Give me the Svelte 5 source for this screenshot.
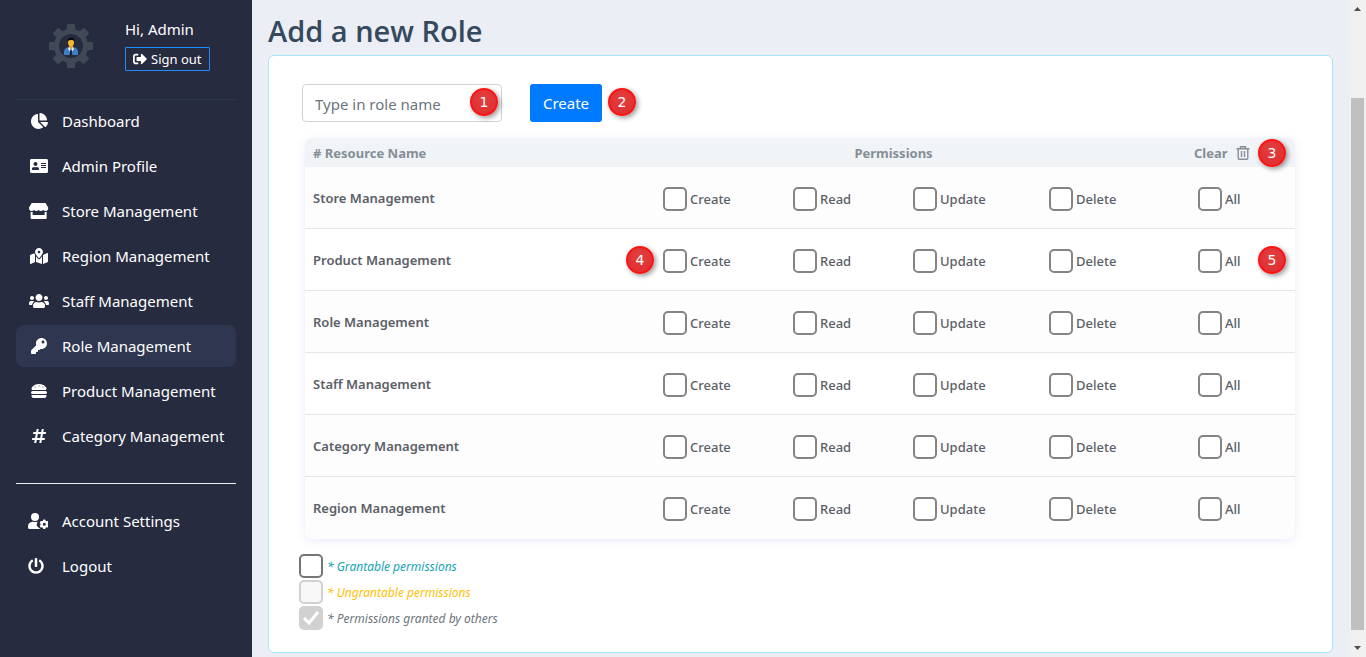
<script>
  const icons = {
    pie: { w: 544, d: 'M527.79 288H290.5l158.03 158.03c6.04 6.04 15.98 6.53 22.19.68 38.7-36.46 65.32-85.61 73.13-140.86 1.34-9.46-6.51-17.85-16.06-17.85zm-15.83-64.8C503.72 103.74 408.26 8.28 288.8.04 279.68-.59 272 7.1 272 16.24V240h223.77c9.14 0 16.82-7.68 16.19-16.8zM224 288V50.71c0-9.55-8.39-17.4-17.84-16.06C86.99 51.49-4.1 155.6.14 280.37 4.5 408.51 114.83 513.59 243.03 511.98c50.4-.63 96.97-16.87 135.26-44.03 7.9-5.6 8.42-17.23 1.57-24.08L224 288z' },
    card: { w: 576, d: 'M528 32H48C21.5 32 0 53.5 0 80v352c0 26.5 21.5 48 48 48h480c26.5 0 48-21.5 48-48V80c0-26.5-21.5-48-48-48zm-352 96c35.3 0 64 28.7 64 64s-28.7 64-64 64-64-28.7-64-64 28.7-64 64-64zm112 236.8c0 10.6-10 19.2-22.4 19.2H86.4C74 384 64 375.4 64 364.8v-19.2c0-31.8 30.1-57.6 67.2-57.6h5c12.3 5.1 25.7 8 39.8 8s27.6-2.9 39.8-8h5c37.1 0 67.2 25.8 67.2 57.6v19.2zM512 312c0 4.4-3.6 8-8 8H360c-4.4 0-8-3.6-8-8v-16c0-4.4 3.6-8 8-8h144c4.4 0 8 3.6 8 8v16zm0-64c0 4.4-3.6 8-8 8H360c-4.4 0-8-3.6-8-8v-16c0-4.4 3.6-8 8-8h144c4.4 0 8 3.6 8 8v16zm0-64c0 4.4-3.6 8-8 8H360c-4.4 0-8-3.6-8-8v-16c0-4.4 3.6-8 8-8h144c4.4 0 8 3.6 8 8v16z' },
    store: { w: 616, d: 'M602 118.6L537.1 15C531.3 5.7 521 0 510 0H106C95 0 84.7 5.7 78.9 15L14 118.6c-33.5 53.5-3.8 127.9 58.8 136.4 4.5.6 9.1.9 13.7.9 29.6 0 55.8-13 73.8-33.1 18 20.1 44.3 33.1 73.8 33.1 29.6 0 55.8-13 73.8-33.1 18 20.1 44.3 33.1 73.8 33.1 29.6 0 55.8-13 73.8-33.1 18.1 20.1 44.3 33.1 73.8 33.1 4.7 0 9.2-.3 13.7-.9 62.8-8.4 92.6-82.8 59-136.4zM529.5 288c-10 0-19.9-1.5-29.5-3.8V384H116v-99.8c-9.6 2.2-19.5 3.8-29.5 3.8-6 0-12.1-.4-18-1.2-5.6-.8-11.1-2.1-16.4-3.6V480c0 17.7 14.3 32 32 32h448c17.7 0 32-14.3 32-32V283.2c-5.4 1.6-10.8 2.9-16.4 3.6-6.1.8-12.1 1.2-18.2 1.2z' },
    map: { w: 576, d: 'M288 0c-69.59 0-126 56.41-126 126 0 56.26 82.35 158.8 113.9 196.02 6.39 7.54 17.82 7.54 24.2 0C331.65 284.8 414 182.26 414 126 414 56.41 357.59 0 288 0zm0 168c-23.2 0-42-18.8-42-42s18.8-42 42-42 42 18.8 42 42-18.8 42-42 42zM20.12 215.95A32.006 32.006 0 0 0 0 245.66v250.32c0 11.32 11.43 19.06 21.94 14.86L160 448V214.92c-8.84-15.98-16.07-31.54-21.25-46.42L20.12 215.95zM288 359.67c-14.07 0-27.38-6.18-36.51-16.96-19.66-23.2-40.57-49.62-59.49-76.72v182l192 64V266c-18.92 27.09-39.82 53.52-59.49 76.72-9.13 10.77-22.44 16.95-36.51 16.95zm266.06-198.51L416 224v288l139.88-55.95A31.996 31.996 0 0 0 576 426.34V176.02c0-11.32-11.43-19.06-21.94-14.86z' },
    users: { w: 640, d: 'M96 224c35.3 0 64-28.7 64-64s-28.7-64-64-64-64 28.7-64 64 28.7 64 64 64zm448 0c35.3 0 64-28.7 64-64s-28.7-64-64-64-64 28.7-64 64 28.7 64 64 64zm32 32h-64c-17.6 0-33.5 7.1-45.1 18.6 40.3 22.1 68.9 62 75.1 109.4h66c17.7 0 32-14.3 32-32v-32c0-35.3-28.7-64-64-64zm-256 0c61.9 0 112-50.1 112-112S381.9 32 320 32 208 82.1 208 144s50.1 112 112 112zm76.8 32h-8.3c-20.8 10-43.9 16-68.5 16s-47.6-6-68.5-16h-8.3C179.6 288 128 339.6 128 403.2V432c0 26.5 21.5 48 48 48h288c26.5 0 48-21.5 48-48v-28.8c0-63.6-51.6-115.2-115.2-115.2zm-223.7-13.4C161.5 263.1 145.6 256 128 256H64c-35.3 0-64 28.7-64 64v32c0 17.7 14.3 32 32 32h65.9c6.3-47.4 34.9-87.3 75.2-109.4z' },
    key: { w: 512, d: 'M512 176.001C512 273.203 433.202 352 336 352c-11.22 0-22.19-1.062-32.827-3.069l-24.012 27.014A23.999 23.999 0 0 1 261.223 384H224v40c0 13.255-10.745 24-24 24h-40v40c0 13.255-10.745 24-24 24H24c-13.255 0-24-10.745-24-24v-78.059c0-6.365 2.529-12.47 7.029-16.971l161.802-161.802C163.108 213.814 160 195.271 160 176 160 78.798 238.797.001 335.999 0 433.488-.001 512 78.511 512 176.001zM336 128c0 26.51 21.49 48 48 48s48-21.49 48-48-21.49-48-48-48-48 21.49-48 48z' },
    burger: { w: 512, d: 'M464 256H48a48 48 0 0 0 0 96h416a48 48 0 0 0 0-96zm16 128H32a16 16 0 0 0-16 16v16a64 64 0 0 0 64 64h352a64 64 0 0 0 64-64v-16a16 16 0 0 0-16-16zM58.64 224h394.72c34.57 0 54.62-43.9 34.82-75.88C448 83.2 359.55 32.1 256 32c-103.54.1-192 51.2-232.18 116.11C4 180.09 24.07 224 58.64 224zM384 112a16 16 0 1 1-16 16 16 16 0 0 1 16-16zM256 80a16 16 0 1 1-16 16 16 16 0 0 1 16-16zm-128 32a16 16 0 1 1-16 16 16 16 0 0 1 16-16z' },
    hash: { w: 448, d: 'M440.667 182.109l7.143-40c1.313-7.355-4.342-14.109-11.813-14.109h-74.81l14.623-81.891C377.123 38.754 371.468 32 363.997 32h-40.632a12 12 0 0 0-11.813 9.891L296.175 128H197.54l14.623-81.891C213.477 38.754 207.822 32 200.35 32h-40.632a12 12 0 0 0-11.813 9.891L132.528 128H53.432a12 12 0 0 0-11.813 9.891l-7.143 40C33.163 185.246 38.818 192 46.289 192h74.81L98.242 320H19.146a12 12 0 0 0-11.813 9.891l-7.143 40C-1.123 377.246 4.532 384 12.003 384h74.81L72.19 465.891C70.877 473.246 76.532 480 84.003 480h40.632a12 12 0 0 0 11.813-9.891L151.826 384h98.634l-14.623 81.891C234.523 473.246 240.178 480 247.65 480h40.632a12 12 0 0 0 11.813-9.891L315.472 384h79.096a12 12 0 0 0 11.813-9.891l7.143-40c1.313-7.355-4.342-14.109-11.813-14.109h-74.81l22.857-128h79.096a12 12 0 0 0 11.813-9.891zM261.889 320h-98.634l22.857-128h98.634l-22.857 128z' },
    userCog: { w: 640, d: 'M224 256a128 128 0 1 0 0-256 128 128 0 0 0 0 256zM134 288C60 288 0 348 0 422v42c0 26 22 48 48 48h345c-16-9-30-20-32-35-12-6-24-14-34-24-22-17-41-47-50-78-5-20 8-34 21-44-1-10-1-20 0-32-8-5-15-10-19-16-18 4-36 5-55 5s-50-5-73-16zm361-75c-8 1-13 5-14 12l-5 24-32 18-23-8c-7-2-13-1-17 5-12 15-21 31-26 48-2 6 0 11 5 15l18 16v38l-18 16c-5 4-7 9-5 15 5 17 14 33 26 48 4 6 10 7 17 5l23-8 32 18 5 24c1 7 6 11 14 12 17 2 34 2 51 0 7-1 12-5 13-12l5-24 32-18 23 8c7 2 13 1 17-5 12-15 20-31 25-48 2-6 0-11-5-15l-18-16v-38l18-16c5-4 7-9 5-15-5-17-13-33-25-48-4-6-10-7-17-5l-23 8-32-18-5-24c-1-7-6-11-13-12-17-2-34-2-51 0zm26 101a48 48 0 1 1 0 96 48 48 0 0 1 0-96z' },
    power: { w: 512, d: 'M400 54.1c63 45 104 118.6 104 201.9 0 136.8-110.8 247.7-247.5 248C120 504.3 8.2 393 8 256.4 7.9 173.1 48.9 99.3 111.8 54.2c11.7-8.3 28-4.8 35 7.7L162.6 90c5.9 10.5 3.1 23.8-6.6 31-41.5 30.8-68 79.6-68 134.9-.1 92.3 74.5 168.1 168 168.1 91.6 0 168.6-74.2 168-169.1-.3-51.8-24.7-101.8-68.1-134-9.7-7.2-12.4-20.5-6.5-30.9l15.8-28.1c7-12.4 23.2-16.1 34.8-7.8zM296 264V24c0-13.3-10.7-24-24-24h-32c-13.3 0-24 10.7-24 24v240c0 13.3 10.7 24 24 24h32c13.3 0 24-10.7 24-24z' },
    signOut: { w: 512, d: 'M497 273L329 441c-15 15-41 4.5-41-17v-96H152c-13.3 0-24-10.7-24-24v-96c0-13.3 10.7-24 24-24h136V88c0-21.4 25.9-32 41-17l168 168c9.3 9.4 9.3 24.6 0 34zM192 436v-40c0-6.6-5.4-12-12-12H96c-17.7 0-32-14.3-32-32V160c0-17.7 14.3-32 32-32h84c6.6 0 12-5.4 12-12V76c0-6.6-5.4-12-12-12H96c-53 0-96 43-96 96v192c0 53 43 96 96 96h84c6.6 0 12-5.4 12-12z' },
  };

  const mainLinks = [
    ['Dashboard', 'pie'],
    ['Admin Profile', 'card'],
    ['Store Management', 'store'],
    ['Region Management', 'map'],
    ['Staff Management', 'users'],
    ['Role Management', 'key'],
    ['Product Management', 'burger'],
    ['Category Management', 'hash'],
  ];
  const accountLinks = [
    ['Account Settings', 'userCog'],
    ['Logout', 'power'],
  ];

  const resources = ['Store', 'Product', 'Role', 'Staff', 'Category', 'Region'];
  const actions = ['Create', 'Read', 'Update', 'Delete', 'All'];
  const gearTeeth = [0, 45, 90, 135, 180, 225, 270, 315];

  let roleName = $state('');
  let granted = $state(resources.map(() => actions.map(() => false)));

  function toggle(row, col) {
    if (col === 4) {
      const value = !granted[row][4];
      granted[row] = actions.map(() => value);
    } else {
      granted[row][col] = !granted[row][col];
      granted[row][4] = granted[row].slice(0, 4).every(Boolean);
    }
  }
  function clearAll() {
    granted = resources.map(() => actions.map(() => false));
  }
</script>

{#snippet icon(name)}
  <svg class="icon" viewBox="0 0 {icons[name].w} 512" aria-hidden="true"><path fill="currentColor" d={icons[name].d} /></svg>
{/snippet}

{#snippet navItem(label, name)}
  <li>
    <a href="#{name}" class:active={name === 'key'}>
      <span class="slot">{@render icon(name)}</span>{label}
    </a>
  </li>
{/snippet}

<div class="shell">
  <aside>
    <div class="profile">
      <svg class="avatar" viewBox="0 0 44 44" aria-hidden="true">
        <g fill="#414956">
          {#each gearTeeth as angle}
            <path d="M17.500 6L18.200 0h7.600L26.500 6z" transform="rotate({angle} 22 22)" />
          {/each}
        </g>
        <circle cx="22" cy="22" r="14.500" fill="none" stroke="#414956" stroke-width="5" />
        <path d="M15 31v-3c0-3 2-4.500 5-5h4c3 .5 5 2 5 5v3z" fill="#3f7fc6" />
        <path d="M20 20h4v3.500l-2 2.500-2-2.500z" fill="#e0a020" />
        <path d="M20 23l2 2.500 2-2.500 1 2-2 2.500h-2l-2-2.500z" fill="#e8eef5" />
        <path d="M21.300 25.500h1.400l.6 5.500h-2.600z" fill="#17202f" />
        <ellipse cx="22" cy="18.500" rx="3" ry="3.700" fill="#f5b52e" />
        <path d="M18.600 18c-.6-3 1-4.500 3.400-4.500 3 0 4 2 3.400 4.500-.4-1.500-1-2-3.400-2s-2.800.8-3.400 2z" fill="#0c0c10" />
      </svg>
      <div class="who">
        <span>Hi, Admin</span>
        <button class="sign-out" type="button">{@render icon('signOut')}Sign out</button>
      </div>
    </div>
    <nav>
      <ul class="main-links">
        {#each mainLinks as [label, name]}{@render navItem(label, name)}{/each}
      </ul>
      <ul class="account-links">
        {#each accountLinks as [label, name]}{@render navItem(label, name)}{/each}
      </ul>
    </nav>
  </aside>

  <main>
    <h1>Add a new Role</h1>
    <section class="panel">
      <form onsubmit={(e) => e.preventDefault()}>
        <div class="field">
          <input class="name" type="text" placeholder="Type in role name" aria-label="Role name" bind:value={roleName} />
          <span class="badge in-field">1</span>
        </div>
        <div class="field">
          <button class="create" type="submit">Create</button>
          <span class="badge beside">2</span>
        </div>
      </form>

      <table>
        <colgroup>
          <col /><col class="c-create" /><col class="c-read" /><col class="c-update" /><col class="c-delete" /><col class="c-all" />
        </colgroup>
        <thead>
          <tr>
            <th scope="col"># Resource Name</th>
            <th scope="colgroup" colspan="4" class="permissions">Permissions</th>
            <th scope="col" class="clear-cell">
              <button class="clear" type="button" onclick={clearAll}>
                Clear
                <svg class="trash" viewBox="0 0 14 14" aria-hidden="true" fill="none" stroke="currentColor" stroke-width="1.400">
                  <path d="M0.500 2.700h13M4.500 2.500V.8h5v1.700M2.200 2.700V12.300q0 1 1 1h7.600q1 0 1-1V2.700M5.500 5v6M8.500 5v6" />
                </svg>
              </button>
              <span class="badge edge">3</span>
            </th>
          </tr>
        </thead>
        <tbody>
          {#each resources as resource, r}
            <tr>
              <th scope="row">{resource} Management</th>
              {#each actions as action, c}
                <td>
                  <label>
                    <input type="checkbox" checked={granted[r][c]} onchange={() => toggle(r, c)} />{action}
                  </label>
                  {#if r === 1 && c === 0}<span class="badge before">4</span>{/if}
                  {#if r === 1 && c === 4}<span class="badge edge">5</span>{/if}
                </td>
              {/each}
            </tr>
          {/each}
        </tbody>
      </table>

      <div class="legend">
        <label class="grantable"><input type="checkbox" />* Grantable permissions</label>
        <label class="ungrantable"><input type="checkbox" disabled />* Ungrantable permissions</label>
        <label class="others"><input type="checkbox" checked disabled />* Permissions granted by others</label>
      </div>
    </section>
  </main>

  <div class="scrollbar" aria-hidden="true">
    <svg viewBox="0 0 17 17"><path d="M5 11l3.500-4 3.500 4z" fill="#505050" /></svg>
    <div class="before-thumb"></div>
    <div class="thumb"></div>
    <div class="after-thumb"></div>
    <svg viewBox="0 0 17 17"><path d="M5 6l3.500 4L12 6z" fill="#505050" /></svg>
  </div>
</div>

<style>
  :global(body) {
    margin: 0;
    background: #ebeef4;
    font-family: 'Noto Sans', 'Open Sans', sans-serif;
  }
  * {
    box-sizing: border-box;
  }
  .shell {
    display: grid;
    grid-template-columns: 252px minmax(0, 1fr) 17px;
    min-height: 100vh;
  }
  button,
  input {
    font: inherit;
  }
  .icon {
    display: block;
    height: 16px;
    flex: none;
  }

  aside {
    background: #272b3f;
    color: #fff;
    padding: 0 16px;
    font-size: 15px;
  }
  .profile {
    display: flex;
    align-items: center;
    gap: 32px;
    height: 100px;
    padding: 0 0 8px 33px;
    border-bottom: 1px solid #2e3750;
  }
  .avatar {
    width: 44px;
    height: 44px;
    flex: none;
  }
  .who {
    display: flex;
    flex-direction: column;
    align-items: flex-start;
    gap: 7px;
    padding-bottom: 2px;
    line-height: 22px;
  }
  .sign-out {
    display: flex;
    align-items: center;
    gap: 4px;
    height: 24px;
    padding: 0 7px;
    border: 1px solid #1e8bff;
    border-radius: 1px;
    background: none;
    color: #fff;
    font-size: 13px;
  }
  .sign-out .icon {
    height: 14px;
  }
  ul {
    list-style: none;
    margin: 0;
    padding: 0;
    display: grid;
    gap: 3px;
  }
  nav a {
    display: flex;
    align-items: center;
    gap: 10px;
    height: 42px;
    padding-left: 10px;
    border-radius: 8px;
    color: #fff;
    text-decoration: none;
    white-space: nowrap;
  }
  nav a.active {
    background: #2f3750;
  }
  .slot {
    display: flex;
    justify-content: center;
    width: 26px;
  }
  .account-links {
    margin-top: 26px;
    padding-top: 16px;
    border-top: 1px solid #eef0f6;
  }
  .account-links .slot {
    justify-content: flex-start;
    padding-left: 2px;
  }

  main {
    padding: 12px 16px 4px;
  }
  h1 {
    margin: 0 0 5px;
    color: #34495e;
    font: 600 29px/38px 'Open Sans', sans-serif;
  }
  .panel {
    padding: 28px 37px 22px 30px;
    border: 1px solid #a8e4fa;
    border-radius: 6px;
    background: #fff;
  }
  form {
    display: flex;
    gap: 28px;
    margin: 0 0 16px 3px;
  }
  .field {
    position: relative;
  }
  .name {
    display: block;
    width: 200px;
    height: 38px;
    padding: 2px 12px 0;
    border: 1px solid #ced4da;
    border-radius: 4px;
    color: #495057;
    font-size: 15px;
  }
  .name::placeholder {
    color: #6c757d;
  }
  .create {
    display: block;
    width: 72px;
    height: 38px;
    padding: 0;
    border: 0;
    border-radius: 3px;
    background: #007bff;
    color: #fff;
    font-size: 15px;
  }

  table {
    width: calc(100% - 6px);
    margin-left: 6px;
    table-layout: fixed;
    border-collapse: separate;
    border-spacing: 0;
    border-radius: 8px;
    background: #fdfdfe;
    box-shadow: 0 2px 8px rgba(110, 90, 240, 0.13);
    color: #5b6066;
    font-size: 13px;
  }
  .c-create { width: 130px; }
  .c-read { width: 120px; }
  .c-update { width: 136px; }
  .c-delete { width: 149px; }
  .c-all { width: 105px; }
  th,
  td {
    position: relative;
    padding: 0 8px;
    text-align: left;
    font-weight: 600;
    white-space: nowrap;
  }
  tbody td {
    font-weight: 500;
  }
  thead th {
    height: 29px;
    background: #f0f4f7;
    color: #868e96;
    font-weight: 700;
  }
  thead th:first-child {
    border-top-left-radius: 8px;
  }
  thead th:last-child {
    border-top-right-radius: 8px;
  }
  thead .permissions {
    padding-right: 66px;
    text-align: center;
  }
  thead .clear-cell {
    padding: 0 4px;
  }
  .clear {
    display: flex;
    align-items: center;
    gap: 8px;
    padding: 0;
    border: 0;
    background: none;
    color: inherit;
  }
  .trash {
    width: 14px;
    height: 14px;
  }
  tbody th,
  tbody td {
    height: 62px;
    border-bottom: 1px solid #e4e6e9;
  }
  tbody tr:nth-child(even) > * {
    background: #fff;
  }
  tbody tr:last-child > * {
    border-bottom: 0;
    background: none;
  }

  label {
    display: flex;
    align-items: center;
    gap: 3px;
  }
  td label {
    padding-top: 2px;
  }
  input[type='checkbox'] {
    appearance: none;
    flex: none;
    width: 24px;
    height: 24px;
    margin: 0;
    border: 2px solid #848484;
    border-radius: 5px;
    background: #fff center / 20px 20px no-repeat;
  }
  input[type='checkbox']:checked {
    border-color: #007bff;
    background-color: #007bff;
    background-image: url("data:image/svg+xml,%3Csvg xmlns='http://www.w3.org/2000/svg' viewBox='0 0 20 20'%3E%3Cpath d='M3 10l5 5 9-11' fill='none' stroke='white' stroke-width='3'/%3E%3C/svg%3E");
  }
  input[type='checkbox']:disabled {
    border-color: #d1d1d1;
    background-color: #f8f8f8;
  }
  input[type='checkbox']:checked:disabled {
    background-color: #d1d1d1;
  }

  .legend {
    display: grid;
    justify-content: start;
    gap: 2px;
    margin-top: 15px;
    font-size: 12px;
    font-style: italic;
  }
  .legend label {
    gap: 4px;
  }
  .legend .grantable { color: #17a2b8; }
  .legend .grantable input { border-color: #767676; }
  .legend .ungrantable { color: #ffc107; }
  .legend .others { color: #6c757d; }

  .badge {
    position: absolute;
    display: flex;
    align-items: center;
    justify-content: center;
    width: 28px;
    height: 28px;
    border: 2px solid #fc1414;
    border-radius: 50%;
    background: radial-gradient(circle at 50% 35%, #e24040, #df2b2f);
    box-shadow: 2px 2px 5px rgba(0, 0, 0, 0.4);
    color: #fff;
    font: 400 14px/1 'DejaVu Sans', sans-serif;
  }
  .in-field {
    top: 4px;
    right: 4px;
  }
  .beside {
    top: 4px;
    left: 78px;
  }
  .edge {
    top: 50%;
    right: 9px;
    margin-top: -14px;
  }
  .before {
    top: 50%;
    left: -29px;
    margin-top: -14px;
  }

  .scrollbar {
    display: flex;
    flex-direction: column;
    background: #f0f0f0;
  }
  .scrollbar svg {
    flex: none;
    width: 17px;
    height: 17px;
  }
  .before-thumb { flex: 81; }
  .thumb {
    flex: 532;
    margin: 0 2px;
    background: #c0c0c0;
  }
  .after-thumb { flex: 10; }
</style>
